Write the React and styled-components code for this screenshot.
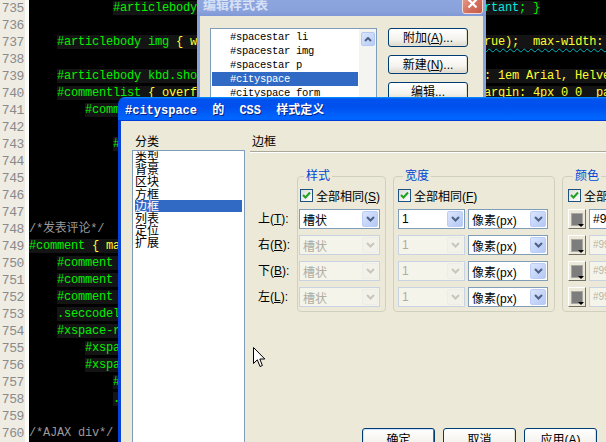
import React from "react"
import styled, { createGlobalStyle } from "styled-components"

const UI_FONT = `"Liberation Sans", "Noto Sans CJK SC", sans-serif`
const MONO = `"Liberation Mono", "Noto Sans CJK SC", monospace`

const GlobalStyle = createGlobalStyle`
  html, body {
    margin: 0;
    padding: 0;
    background: #000;
    overflow: hidden;
  }
`

const TOKEN_COLORS = {
  g: "#00f000",
  y: "#ffff30",
  c: "#00e8e0",
  m: "#9a9a9a",
}

const LINES = [
  [735, [["            "], ["#articlebody blockquote ", "g"], ["{ margin: 10px 0 10px 0 ", "y"], ["!important", "c"], ["; }", "g"]]],
  [736, []],
  [737, [["    "], ["#articlebody img ", "g"], ["{ width: expression(this.width>500 ? 500 : ", "y"], ["true);  max-width: 500px;", "y", true], [" }", "y"]]],
  [738, []],
  [739, [["    "], ["#articlebody kbd.shortcut ", "g"], ["{ padding: 0 3px; border: 1px; font: 1em Arial, Helvetica, sans-serif; }", "y"]]],
  [740, [["    "], ["#commentlist ", "g"], ["{ overflow: hidden; width: 100%; height: auto; margin: 4px 0 0  padding: 0; }", "y"]]],
  [741, [["        "], ["#commentlist li ", "g"], ["{ padding: 5px; }", "y"]]],
  [742, []],
  [743, [["            "], ["#commentlist li p ", "g"], ["{ margin: 0; }", "y"]]],
  [744, []],
  [745, []],
  [746, []],
  [747, []],
  [748, [["/*发表评论*/", "m"]]],
  [749, [["#comment ", "g"], ["{ margin: 10px 0; }", "y"]]],
  [750, [["    "], ["#comment h3 ", "g"], ["{ font-size: 14px; }", "y"]]],
  [751, [["    "], ["#comment p ", "g"], ["{ margin: 0; }", "y"]]],
  [752, [["    "], ["#comment textarea ", "g"], ["{ width: 90%; }", "y"]]],
  [753, [["    "], [".seccodeline ", "g"], ["{ clear: both; }", "y"]]],
  [754, [["    "], ["#xspace-replyform ", "g"], ["{ padding: 0; }", "y"]]],
  [755, [["        "], ["#xspace-replyform p ", "g"], ["{ margin: 0; }", "y"]]],
  [756, [["        "], ["#xspace-replyform label ", "g"], ["{ float: left; }", "y"]]],
  [757, [["            "], ["#xspace-replyform em ", "g"], ["{ color: #f00; }", "y"]]],
  [758, [["            "], [".replybutton ", "g"], ["{ margin: 0; }", "y"]]],
  [759, []],
  [760, [["/*AJAX div*/", "m"]]],
]

const SHEET_ITEMS = ["#spacestar li", "#spacestar img", "#spacestar p", "#cityspace", "#cityspace form", "#cityspace p"]
const CATEGORIES = ["类型", "背景", "区块", "方框", "边框", "列表", "定位", "扩展"]
const SIDES = [["上", "T"], ["右", "R"], ["下", "B"], ["左", "L"]]

/* ---------- editor ---------- */

const Desktop = styled.div`
  position: relative;
  width: 606px;
  height: 442px;
  overflow: hidden;
  background: #000;
`

const Editor = styled.div`
  display: flex;
  height: 100%;
`

const Gutter = styled.div`
  width: 25px;
  flex: none;
  background: #eeece3;
  border-right: 4px solid #fbfbf7;
  color: #8a8a8a;
  font-family: ${MONO};
  font-size: 13px;
  letter-spacing: -0.4px;
`

const LineNo = styled.div`
  height: 17px;
  line-height: 17px;
  text-align: right;
  padding-right: 1px;
`

const Code = styled.div`
  flex: 1;
  background: #000;
  font-family: ${MONO};
  font-size: 12px;
  letter-spacing: -0.2px;
`

const CodeLine = styled.div`
  height: 17px;
  line-height: 17px;
  white-space: pre;
`

const Tok = styled.span`
  color: ${(p) => TOKEN_COLORS[p.$k] || "transparent"};
  background: ${(p) => (p.$k && p.$k !== "m" ? "#141414" : "transparent")};
  ${(p) =>
    p.$wavy &&
    `text-decoration: underline wavy #00b8c0; text-underline-offset: 3px; text-decoration-thickness: 1px;`}
`

/* ---------- shared controls ---------- */

const XpButton = styled.button`
  width: ${(p) => p.$w}px;
  height: ${(p) => p.$h}px;
  flex: none;
  padding: 0;
  border: 1px solid #003c74;
  border-radius: 3px;
  background: linear-gradient(#ffffff, #f4f3ee 60%, #e3e0d4 90%, #d6d0c5);
  box-shadow: ${(p) =>
    p.$default ? "inset -1px -1px 0 #3d6fd6, inset 1px 1px 0 #cde0fc" : "inset -1px -1px 0 #e3e0d4"};
  font-family: ${UI_FONT};
  font-size: 12px;
  color: #000;
  line-height: 1;
  text-align: center;
`

const Chevron = ({ color }) => (
  <svg width="9" height="6" viewBox="0 0 9 6">
    <path d="M1 1 L4.5 4.5 L8 1" fill="none" stroke={color} strokeWidth="2" />
  </svg>
)

/* ---------- stylesheet window (inactive, behind) ---------- */

const SheetWindow = styled.div`
  position: absolute;
  left: 197px;
  top: -10px;
  width: 289px;
  height: 150px;
  display: flex;
  flex-direction: column;
`

const InactiveTitle = styled.div`
  height: 26px;
  flex: none;
  display: flex;
  align-items: center;
  padding: 0 3px 0 6px;
  border-radius: 7px 7px 0 0;
  background: linear-gradient(#a9bdec, #8ea6de 30%, #8aa2dc 80%, #7f98d6);
  color: #d6e0f6;
  font-family: ${UI_FONT};
  font-weight: bold;
  font-size: 13px;
`

const TitleText = styled.span`
  flex: 1;
`

const CloseBtn = styled.div`
  width: 21px;
  height: 21px;
  border: 1px solid #f3d8d0;
  border-radius: 3px;
  box-sizing: border-box;
  background: linear-gradient(135deg, #e8a696, #d36e5c 60%, #c45a48);
  display: flex;
  align-items: center;
  justify-content: center;
`

const SheetBody = styled.div`
  flex: 1;
  display: flex;
  gap: 11px;
  padding: 12px 0 0 10px;
  background: #ece9d8;
  border: 3px solid #8aa2dc;
  border-top: 0;
`

const SheetList = styled.div`
  width: 167px;
  height: 110px;
  flex: none;
  box-sizing: border-box;
  border: 1px solid #7f9db9;
  background: #fff;
  display: flex;
`

const SheetItems = styled.div`
  flex: 1;
  padding: 1px 1px 0;
`

const SheetItem = styled.div`
  height: 14px;
  line-height: 14px;
  padding-left: 18px;
  font-family: ${MONO};
  font-size: 10.5px;
  letter-spacing: -0.3px;
  white-space: pre;
  color: ${(p) => (p.$sel ? "#fff" : "#000")};
  background: ${(p) => (p.$sel ? "#316ac5" : "transparent")};
`

const ScrollTrack = styled.div`
  width: 17px;
  background: #f4f4f0;
  padding-top: 3px;
  display: flex;
  justify-content: center;
`

const ScrollUp = styled.div`
  width: 14px;
  height: 14px;
  border: 1px solid #b5c8f3;
  border-radius: 2px;
  box-sizing: border-box;
  background: linear-gradient(135deg, #dbe6fd, #b7ccf6);
  display: flex;
  align-items: center;
  justify-content: center;
`

const SheetButtons = styled.div`
  display: flex;
  flex-direction: column;
  gap: 8px;
`

/* ---------- css definition dialog (active, front) ---------- */

const Dialog = styled.div`
  position: absolute;
  left: 118px;
  top: 97px;
  width: 520px;
  height: 370px;
  display: flex;
  flex-direction: column;
`

const ActiveTitle = styled.div`
  height: 24px;
  flex: none;
  display: flex;
  align-items: center;
  padding-left: 7px;
  border-radius: 7px 0 0 0;
  background: linear-gradient(
    #0997ff 0%,
    #0053ee 8%,
    #0050ee 40%,
    #0066ff 88%,
    #0066ff 93%,
    #005bff 95%,
    #003dd7 96%,
    #003dd7 100%
  );
  color: #fff;
  font-family: ${MONO};
  font-weight: bold;
  font-size: 12px;
  word-spacing: 8px;
  text-shadow: 1px 1px 0 #0a1e80;
  white-space: pre;
`

const DialogBody = styled.div`
  flex: 1;
  display: flex;
  gap: 7px;
  padding: 15px 0 0 11px;
  background: #ece9d8;
  border-left: 3px solid #0841d9;
  font-family: ${UI_FONT};
  font-size: 12px;
  color: #000;
`

const LeftCol = styled.div`
  width: 113px;
  flex: none;
  display: flex;
  flex-direction: column;
`

const SmallLabel = styled.div`
  height: 12px;
  line-height: 12px;
  margin-bottom: 2px;
  padding-left: ${(p) => p.$pl || 0}px;
`

const CatList = styled.div`
  height: 320px;
  box-sizing: border-box;
  border: 1px solid #7f9db9;
  background: #fff;
  padding: 0 2px;
`

const CatItem = styled.div`
  height: 12.2px;
  line-height: 12.2px;
  font-family: "Noto Sans CJK SC", sans-serif;
  font-size: 12px;
  color: ${(p) => (p.$sel ? "#fff" : "#000")};
  background: ${(p) => (p.$sel ? "#316ac5" : "transparent")};
`

const RightCol = styled.div`
  flex: none;
  width: 360px;
  height: 315px;
  display: flex;
  flex-direction: column;
`

const Rule = styled.div`
  margin: 1px 0 0 -2px;
  border-top: 1px solid #aca899;
  border-bottom: 1px solid #fff;
`

const GroupsRow = styled.div`
  display: flex;
  gap: 7px;
  margin-top: 16px;
  align-items: flex-start;
`

const SideLabels = styled.div`
  width: 39px;
  flex: none;
  padding: 40px 0 0 6px;
  display: flex;
  flex-direction: column;
  gap: 6px;
  margin-right: -7px;
`

const SideLabel = styled.div`
  height: 20px;
  line-height: 20px;
  white-space: nowrap;
`

const Group = styled.fieldset`
  box-sizing: border-box;
  width: ${(p) => p.$w}px;
  flex: none;
  margin: 0;
  min-width: 0;
  padding: 6px 0 4px ${(p) => p.$pl}px;
  border: 1px solid #d0d0bf;
  border-radius: 4px;
  display: flex;
  flex-direction: column;
  gap: 6px;
`

const Legend = styled.legend`
  margin-left: 5px;
  padding: 0 2px;
  line-height: 14px;
  color: #0046d5;
  font-size: 12px;
`

const CheckRow = styled.div`
  height: 13px;
  display: flex;
  align-items: center;
  gap: 3px;
  margin: 0 0 1px ${(p) => p.$ml || 0}px;
  white-space: nowrap;
`

const CheckBox = styled.div`
  width: 13px;
  height: 13px;
  flex: none;
  box-sizing: border-box;
  border: 1px solid #1c5180;
  background: linear-gradient(135deg, #dcdcd7, #fff);
  display: flex;
  align-items: center;
  justify-content: center;
`

const FieldRow = styled.div`
  display: flex;
  gap: 3px;
  height: 20px;
`

const SelectBox = styled.div`
  width: ${(p) => p.$w}px;
  height: 20px;
  flex: none;
  box-sizing: border-box;
  display: flex;
  align-items: center;
  border: 1px solid ${(p) => (p.$off ? "#c9d2e0" : "#7f9db9")};
  background: ${(p) => (p.$off ? "#f5f4ea" : "#fff")};
  color: ${(p) => (p.$off ? "#b0ad9f" : "#000")};
  padding: 0 1px 0 3px;
  white-space: nowrap;
`

const SelectValue = styled.span`
  flex: 1;
  overflow: hidden;
`

const DropBtn = styled.div`
  width: 16px;
  height: 16px;
  flex: none;
  box-sizing: border-box;
  border: 1px solid ${(p) => (p.$off ? "#eeede5" : "#bccdf5")};
  border-radius: 2px;
  background: ${(p) =>
    p.$off ? "#f3f2ea" : "linear-gradient(135deg, #dbe5fd, #b4c8f5)"};
  display: flex;
  align-items: center;
  justify-content: center;
`

const Swatch = styled.div`
  position: relative;
  width: 18px;
  height: 20px;
  flex: none;
  box-sizing: border-box;
  border: 1px solid;
  border-color: #fff #716f64 #716f64 #fff;
  background: #ece9d8;
  display: flex;
  align-items: center;
  justify-content: center;
`

const SwatchColor = styled.div`
  width: 12px;
  height: 13px;
  background: #7d7d7d;
  border: 1px solid #a8a8a0;
  box-sizing: border-box;
`

const SwatchArrow = styled.div`
  position: absolute;
  right: 1px;
  bottom: 1px;
  width: 0;
  height: 0;
  border-left: 3px solid transparent;
  border-right: 3px solid transparent;
  border-top: 3px solid #000;
`

const ColorInput = styled.div`
  width: 70px;
  height: 20px;
  box-sizing: border-box;
  border: 1px solid ${(p) => (p.$off ? "#c9d2e0" : "#7f9db9")};
  background: ${(p) => (p.$off ? "#f5f4ea" : "#fff")};
  color: ${(p) => (p.$off ? "#b8b5a8" : "#000")};
  font-size: ${(p) => (p.$off ? 10 : 12)}px;
  line-height: 18px;
  padding-left: 3px;
`

const Footer = styled.div`
  margin-top: auto;
  display: flex;
  gap: 8px;
  padding-left: 110px;
`

const Cursor = styled.svg`
  position: absolute;
  left: 253px;
  top: 347px;
`

const Select = ({ w, value, off }) => (
  <SelectBox $w={w} $off={off}>
    <SelectValue>{value}</SelectValue>
    <DropBtn $off={off}>
      <Chevron color={off ? "#c8c6bb" : "#4d6185"} />
    </DropBtn>
  </SelectBox>
)

const Check = () => (
  <CheckBox>
    <svg width="9" height="9" viewBox="0 0 9 9">
      <path d="M1 4 L3.5 6.5 L8 1.5" fill="none" stroke="#21a121" strokeWidth="2" />
    </svg>
  </CheckBox>
)

const Key = ({ k }) => (
  <>
    (<u>{k}</u>)
  </>
)

export default function App() {
  return (
    <Desktop>
      <GlobalStyle />
      <Editor>
        <Gutter>
          {LINES.map(([n]) => (
            <LineNo key={n}>{n}</LineNo>
          ))}
        </Gutter>
        <Code>
          {LINES.map(([n, toks]) => (
            <CodeLine key={n}>
              {toks.map(([text, k, wavy], i) => (
                <Tok key={i} $k={k} $wavy={wavy}>
                  {text}
                </Tok>
              ))}
            </CodeLine>
          ))}
        </Code>
      </Editor>

      <SheetWindow>
        <InactiveTitle>
          <TitleText>编辑样式表</TitleText>
          <CloseBtn>
            <svg width="11" height="11" viewBox="0 0 11 11">
              <path d="M1.5 1.5 L9.5 9.5 M9.5 1.5 L1.5 9.5" stroke="#fff" strokeWidth="2.2" />
            </svg>
          </CloseBtn>
        </InactiveTitle>
        <SheetBody>
          <SheetList>
            <SheetItems>
              {SHEET_ITEMS.map((s) => (
                <SheetItem key={s} $sel={s === "#cityspace"}>
                  {s}
                </SheetItem>
              ))}
            </SheetItems>
            <ScrollTrack>
              <ScrollUp>
                <svg width="8" height="5" viewBox="0 0 8 5">
                  <path d="M1 4 L4 1 L7 4" fill="none" stroke="#4d6185" strokeWidth="2" />
                </svg>
              </ScrollUp>
            </ScrollTrack>
          </SheetList>
          <SheetButtons>
            <XpButton $w={80} $h={19}>
              附加<Key k="A" />...
            </XpButton>
            <XpButton $w={80} $h={19}>
              新建<Key k="N" />...
            </XpButton>
            <XpButton $w={80} $h={19}>
              编辑...
            </XpButton>
          </SheetButtons>
        </SheetBody>
      </SheetWindow>

      <Dialog>
        <ActiveTitle>#cityspace 的 CSS 样式定义</ActiveTitle>
        <DialogBody>
          <LeftCol>
            <SmallLabel $pl={3}>分类</SmallLabel>
            <CatList>
              {CATEGORIES.map((c) => (
                <CatItem key={c} $sel={c === "边框"}>
                  {c}
                </CatItem>
              ))}
            </CatList>
          </LeftCol>

          <RightCol>
            <SmallLabel>边框</SmallLabel>
            <Rule />
            <GroupsRow>
              <SideLabels>
                {SIDES.map(([t, k]) => (
                  <SideLabel key={k}>
                    {t}
                    <Key k={k} />:
                  </SideLabel>
                ))}
              </SideLabels>

              <Group $w={89} $pl={1}>
                <Legend>样式</Legend>
                <CheckRow $ml={1}>
                  <Check />
                  <span>
                    全部相同<Key k="S" />
                  </span>
                </CheckRow>
                {SIDES.map(([t], i) => (
                  <FieldRow key={t}>
                    <Select w={81} value="槽状" off={i > 0} />
                  </FieldRow>
                ))}
              </Group>

              <Group $w={162} $pl={4}>
                <Legend>宽度</Legend>
                <CheckRow>
                  <Check />
                  <span>
                    全部相同<Key k="F" />
                  </span>
                </CheckRow>
                {SIDES.map(([t], i) => (
                  <FieldRow key={t}>
                    <Select w={67} value="1" off={i > 0} />
                    <Select w={80} value="像素(px)" />
                  </FieldRow>
                ))}
              </Group>

              <Group $w={90} $pl={5}>
                <Legend>颜色</Legend>
                <CheckRow>
                  <Check />
                  <span>全部相同</span>
                </CheckRow>
                {SIDES.map(([t], i) => (
                  <FieldRow key={t}>
                    <Swatch>
                      <SwatchColor />
                      <SwatchArrow />
                    </Swatch>
                    <ColorInput $off={i > 0}>#999999</ColorInput>
                  </FieldRow>
                ))}
              </Group>
            </GroupsRow>

            <Footer>
              <XpButton $w={73} $h={23} $default>
                确定
              </XpButton>
              <XpButton $w={73} $h={23}>
                取消
              </XpButton>
              <XpButton $w={73} $h={23}>
                应用<Key k="A" />
              </XpButton>
            </Footer>
          </RightCol>
        </DialogBody>
      </Dialog>

      <Cursor width="13" height="21" viewBox="0 0 13 21">
        <path d="M0.5 0.5 L0.5 16.5 L4.3 12.8 L7 19.5 L9.4 18.5 L6.8 12 L11.8 12 Z" fill="#fff" stroke="#000" strokeWidth="1" />
      </Cursor>
    </Desktop>
  )
}
